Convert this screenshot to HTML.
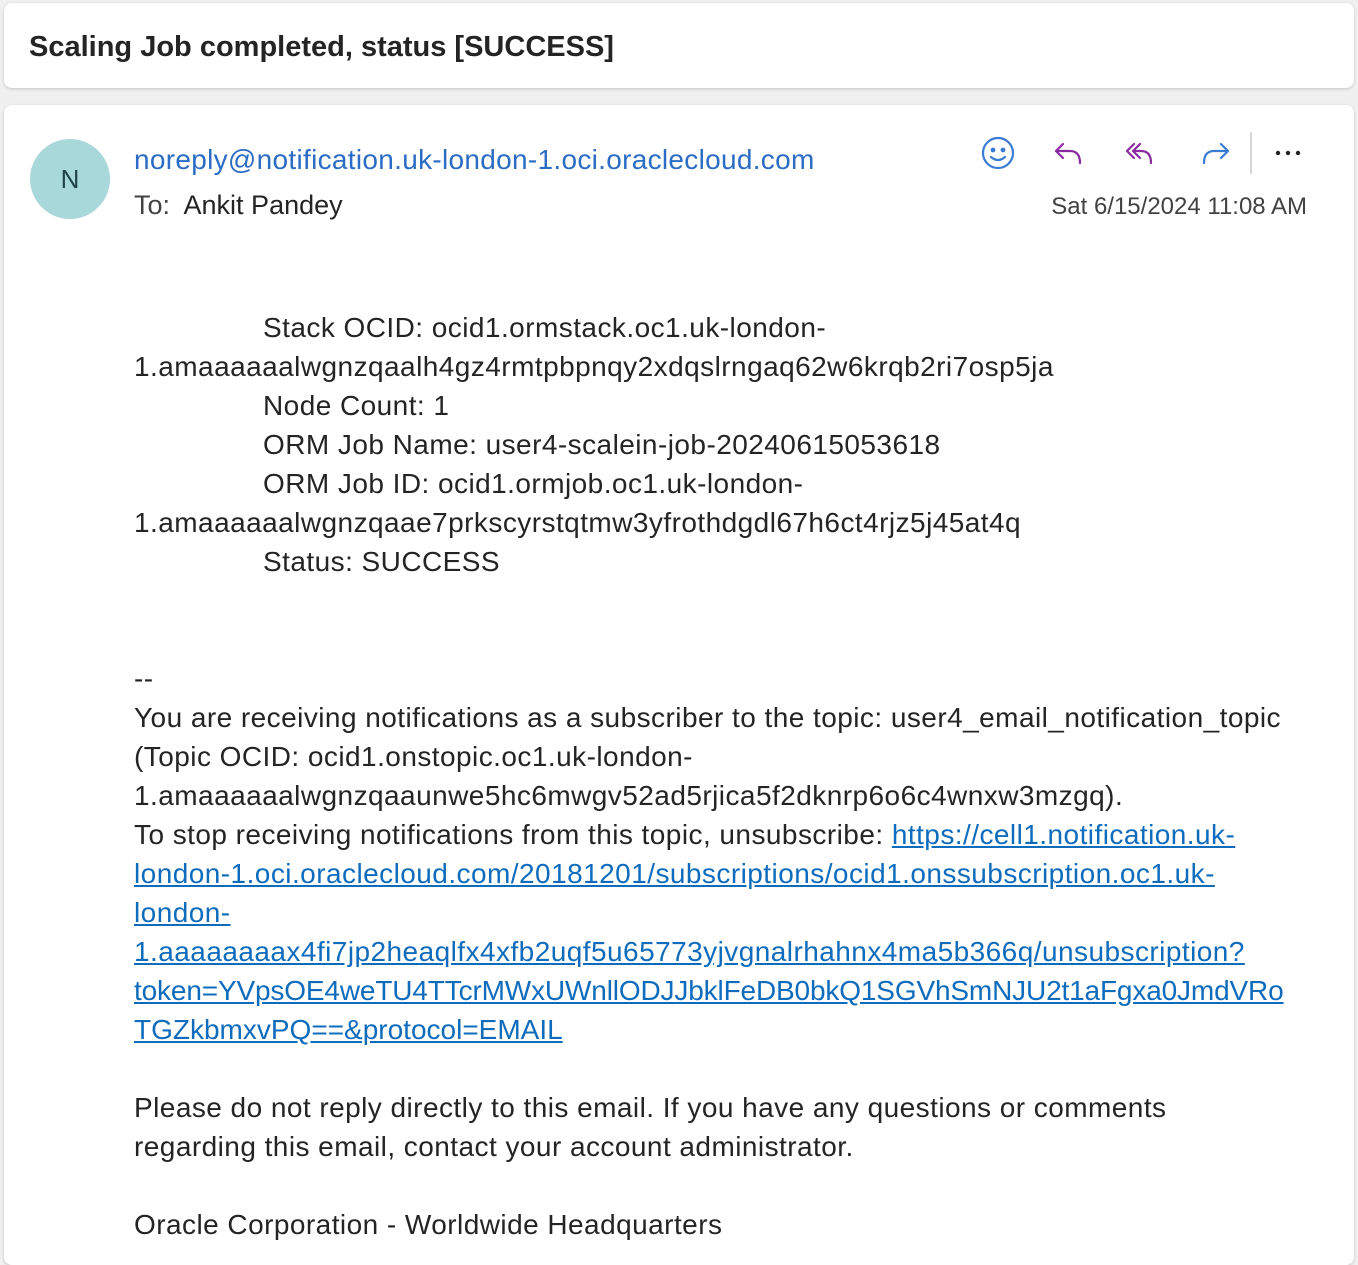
<!DOCTYPE html>
<html><head><meta charset="utf-8"><style>
html,body{margin:0;padding:0;background:#f0f0f0;width:1358px;height:1246px;overflow:hidden;font-family:"Liberation Sans","DejaVu Sans",sans-serif;}
.card{position:absolute;background:#fff;border-radius:8px;box-shadow:0 1px 3px rgba(0,0,0,.18);}
.t{position:absolute;white-space:nowrap;}
.b{position:absolute;left:134px;font-size:28px;letter-spacing:0.45px;line-height:39px;color:#242424;white-space:nowrap;}
.b div{height:39px}
.i{padding-left:129px}
a{color:#0f6cbd;text-decoration:underline;}
</style></head><body>
<div class="card" style="left:4px;top:3px;width:1350px;height:85px;"></div>
<div class="t" style="left:29px;top:31px;font-size:29px;font-weight:600;color:#242424;">Scaling Job completed, status [SUCCESS]</div>
<div class="card" style="left:4px;top:105px;width:1350px;height:1160px;"></div>
<div style="position:absolute;left:30px;top:139px;width:80px;height:80px;border-radius:50%;background:#a9d8da;color:#1e4447;font-size:26px;line-height:80px;text-align:center;">N</div>
<div class="t" style="left:134px;top:144px;font-size:28px;letter-spacing:0.3px;color:#2b6cc4;">noreply@notification.uk-london-1.oci.oraclecloud.com</div>
<div class="t" style="left:134px;top:190px;font-size:27px;color:#424242;">To:&nbsp; <span style="color:#242424">Ankit Pandey</span></div>
<div class="t" style="right:51px;top:193px;font-size:24px;color:#424242;">Sat 6/15/2024 11:08 AM</div>
<svg style="position:absolute;left:975px;top:130px" width="340" height="50" viewBox="0 0 340 50">
 <g fill="none" stroke-width="2.2" stroke-linecap="round" stroke-linejoin="round">
  <circle cx="23" cy="23" r="15" stroke="#3a7bd5"/>
  <circle cx="18" cy="20" r="1.3" fill="#3a7bd5" stroke="#3a7bd5"/>
  <circle cx="28" cy="20" r="1.3" fill="#3a7bd5" stroke="#3a7bd5"/>
  <path d="M16 27 q7 6 14 0" stroke="#3a7bd5"/>
  <path d="M88 14 l-7 7 l7 7 M81 21 h14 q10 0 10 12" stroke="#8a2aa0"/>
  <path d="M159 14 l-7 7 l7 7 M165 14 l-7 7 l7 7 M158 21 h8 q10 0 10 12" stroke="#8a2aa0"/>
  <path d="M246 14 l7 7 l-7 7 M253 21 h-14 q-10 0 -10 12" stroke="#3a7bd5"/>
  <path d="M276 3 v40" stroke="#d6d6d6" stroke-width="2"/>
 </g>
 <g fill="#242424"><circle cx="303" cy="23" r="2.2"/><circle cx="313" cy="23" r="2.2"/><circle cx="323" cy="23" r="2.2"/></g>
</svg>
<div class="b" style="top:308px;">
<div class="i">Stack OCID: ocid1.ormstack.oc1.uk-london-</div>
<div>1.amaaaaaalwgnzqaalh4gz4rmtpbpnqy2xdqslrngaq62w6krqb2ri7osp5ja</div>
<div class="i">Node Count: 1</div>
<div class="i">ORM Job Name: user4-scalein-job-20240615053618</div>
<div class="i">ORM Job ID: ocid1.ormjob.oc1.uk-london-</div>
<div>1.amaaaaaalwgnzqaae7prkscyrstqtmw3yfrothdgdl67h6ct4rjz5j45at4q</div>
<div class="i">Status: SUCCESS</div>
<div></div><div></div>
<div>--</div>
<div>You are receiving notifications as a subscriber to the topic: user4_email_notification_topic</div>
<div>(Topic OCID: ocid1.onstopic.oc1.uk-london-</div>
<div>1.amaaaaaalwgnzqaaunwe5hc6mwgv52ad5rjica5f2dknrp6o6c4wnxw3mzgq).</div>
<div>To stop receiving notifications from this topic, unsubscribe: <a>https://cell1.notification.uk-</a></div>
<div><a>london-1.oci.oraclecloud.com/20181201/subscriptions/ocid1.onssubscription.oc1.uk-</a></div>
<div><a>london-</a></div>
<div><a>1.aaaaaaaax4fi7jp2heaqlfx4xfb2uqf5u65773yjvgnalrhahnx4ma5b366q/unsubscription?</a></div>
<div style="letter-spacing:-0.15px"><a>token=YVpsOE4weTU4TTcrMWxUWnllODJJbklFeDB0bkQ1SGVhSmNJU2t1aFgxa0JmdVRo</a></div>
<div style="letter-spacing:0px"><a>TGZkbmxvPQ==&amp;protocol=EMAIL</a></div>
<div></div>
<div>Please do not reply directly to this email. If you have any questions or comments</div>
<div>regarding this email, contact your account administrator.</div>
<div></div>
<div>Oracle Corporation - Worldwide Headquarters</div>
</div>
</body></html>
